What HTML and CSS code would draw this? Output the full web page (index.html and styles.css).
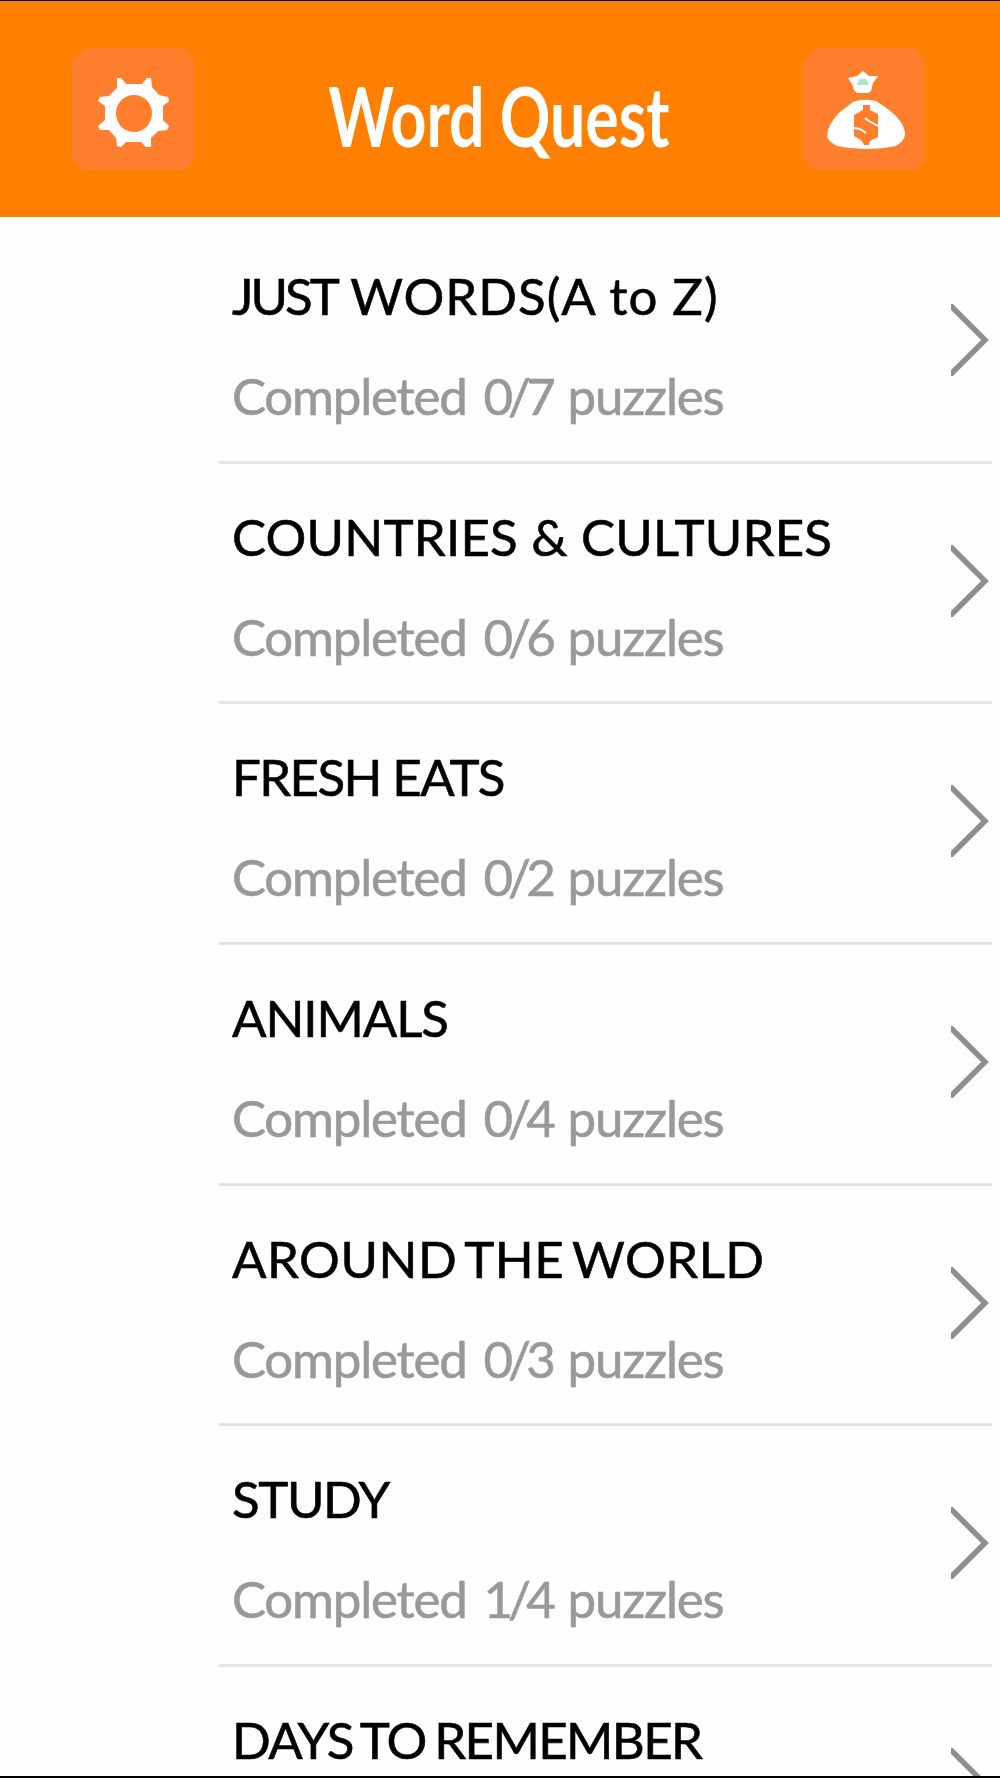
FILE: index.html
```html
<!DOCTYPE html>
<html lang="en">
<head>
    <meta charset="UTF-8">
    <meta name="viewport" content="width=device-width, initial-scale=1.0">
    <title>Word Quest</title>
    <link rel="stylesheet" href="styles.css">
</head>
<body>
    <header class="top-bar">
        <button class="icon-button" aria-label="Settings">
            <svg viewBox="0 0 122 122">
                <path class="tile" d="M14 0H112L122 11V112L114 122H11L0 111V13Z"/>
                <path class="white" fill-rule="evenodd" d="M45 30 L49 30 L54 36 H70 L75 30 L79 30 L80 39 L87 47 L96 49 L97 53 L91 58 V72 L97 78 L95 82 L86 83 L79 90 L79 99 L74 99 L69 94 H54 L49 99 L45 98 L44 90 L37 82 L28 82 L26 78 L33 72 V58 L26 53 L28 49 L37 48 L45 40Z M62 47 C52 47 44 55 44 65 C44 76 52 84 62 84 C72 84 80 76 80 65 C80 55 72 47 62 47Z"/>
            </svg>
        </button>
        <h1>Word Quest</h1>
        <button class="icon-button" aria-label="Coins">
            <svg viewBox="0 0 122 122">
                <path class="tile" d="M14 0H112L122 11V112L114 122H11L0 111V13Z"/>
                <path class="white" d="M45 30 L54 28 L60 23 L66 28 L75 28 L70 35 L68 43 L65 45 H54 L51 42 L49 36Z"/>
                <path class="gem" d="M54 36 L57 31 H63 L66 36 V37 H54Z"/>
                <path class="white" d="M50 54 Q60 50 73 53 L82 59 Q102 73 102 87 Q101 93 93 98 Q79 101 62 101 Q48 101 34 98 Q24 93 24 87 Q25 76 37 64Z"/>
                <path class="tile" d="M60 57 H67 V62 L75 66 V89 L67 93 L66 97 H61 L59 93 L51 88 V67 L60 62Z"/>
                <path class="dollar" d="M62 70 L66 73 L75 78 M51 80 L57 81 L63 85"/>
            </svg>
        </button>
    </header>

    <ul class="category-list">
        <li class="category">
            <div>
                <h2 class="just-words"><span>JUST</span> WORDS(A to Z)</h2>
                <p>Completed <span>0/7</span> puzzles</p>
            </div>
            <svg class="chevron" viewBox="0 0 38 72"><path d="M-1 1 L34 36 L-1 71"/></svg>
        </li>
        <li class="category">
            <div>
                <h2 class="countries">COUNTRIES &amp; CULTURES</h2>
                <p>Completed <span>0/6</span> puzzles</p>
            </div>
            <svg class="chevron" viewBox="0 0 38 72"><path d="M-1 1 L34 36 L-1 71"/></svg>
        </li>
        <li class="category">
            <div>
                <h2 class="fresh-eats">FRESH EATS</h2>
                <p>Completed <span>0/2</span> puzzles</p>
            </div>
            <svg class="chevron" viewBox="0 0 38 72"><path d="M-1 1 L34 36 L-1 71"/></svg>
        </li>
        <li class="category">
            <div>
                <h2 class="animals">ANIMALS</h2>
                <p>Completed <span>0/4</span> puzzles</p>
            </div>
            <svg class="chevron" viewBox="0 0 38 72"><path d="M-1 1 L34 36 L-1 71"/></svg>
        </li>
        <li class="category">
            <div>
                <h2 class="around">AROUND THE WORLD</h2>
                <p>Completed <span>0/3</span> puzzles</p>
            </div>
            <svg class="chevron" viewBox="0 0 38 72"><path d="M-1 1 L34 36 L-1 71"/></svg>
        </li>
        <li class="category">
            <div>
                <h2 class="study">STUDY</h2>
                <p>Completed <span>1/4</span> puzzles</p>
            </div>
            <svg class="chevron" viewBox="0 0 38 72"><path d="M-1 1 L34 36 L-1 71"/></svg>
        </li>
        <li class="category">
            <div>
                <h2 class="days">DAYS TO REMEMBER</h2>
            </div>
            <svg class="chevron" viewBox="0 0 38 72"><path d="M-1 1 L34 36 L-1 71"/></svg>
        </li>
    </ul>
</body>
</html>
```
FILE: styles.css
```css
:root {
    --orange: #ff8000;
    --tile: #ff7f2e;
    --line: #e5e5e5;
    --muted: #999;
}

* {
    box-sizing: border-box;
    margin: 0;
    padding: 0;
}

body {
    height: 1778px;
    display: flex;
    flex-direction: column;
    overflow: hidden;
    background: #fefefe;
    border-top: 1px solid #000;
    border-bottom: 2px solid #000;
    font-family: Lato, "Gill Sans", sans-serif;
}

.top-bar {
    flex: none;
    height: 216px;
    padding: 47px 72px 0;
    display: grid;
    grid-template-columns: 122px 1fr 125px;
    background: var(--orange);
}

.top-bar h1 {
    justify-self: center;
    color: #fff;
    font-size: 83px;
    font-weight: 700;
    line-height: 134px;
    white-space: nowrap;
    transform: scaleX(0.755);
}

.icon-button {
    width: 122px;
    height: 122px;
    border: 0;
    background: none;
}

.icon-button svg {
    display: block;
}

.tile { fill: var(--tile); }
.white { fill: #fff; }
.gem { fill: #a8e6cf; }
.dollar { fill: none; stroke: #fff; stroke-width: 2; }

.category-list {
    flex: 1;
    min-height: 0;
    overflow: hidden;
    list-style: none;
    padding: 6px 8px 0 219px;
}

.category {
    height: 240.7px;
    padding: 0 3px 0 13px;
    display: flex;
    justify-content: space-between;
    border-bottom: 3px solid var(--line);
}

.category h2 {
    margin-top: 43px;
    font-size: 51px;
    font-weight: 400;
    line-height: 60px;
    white-space: nowrap;
    color: #000;
    -webkit-text-stroke: 0.6px #000;
}

/* per-title tracking */
.category .just-words { letter-spacing: 1px; }
.just-words span { letter-spacing: -3px; }
.category .countries { letter-spacing: 0.2px; }
.category .fresh-eats { letter-spacing: -1.6px; }
.category .animals { letter-spacing: -1.1px; }
.category .around { letter-spacing: 0.5px; word-spacing: -5px; }
.category .study { letter-spacing: -1.4px; }
.category .days { letter-spacing: -1.6px; word-spacing: -3px; }

.category p {
    margin-top: 40px;
    font-size: 51px;
    line-height: 60px;
    letter-spacing: -1.2px;
    word-spacing: 5px;
    white-space: nowrap;
    color: var(--muted);
    -webkit-text-stroke: 0.6px var(--muted);
}

.category p span {
    letter-spacing: -5px;
}

.chevron {
    flex: none;
    width: 38px;
    height: 72px;
    margin-top: 81px;
}

.chevron path {
    fill: none;
    stroke: #8f8f8f;
    stroke-width: 5.5;
}
```
